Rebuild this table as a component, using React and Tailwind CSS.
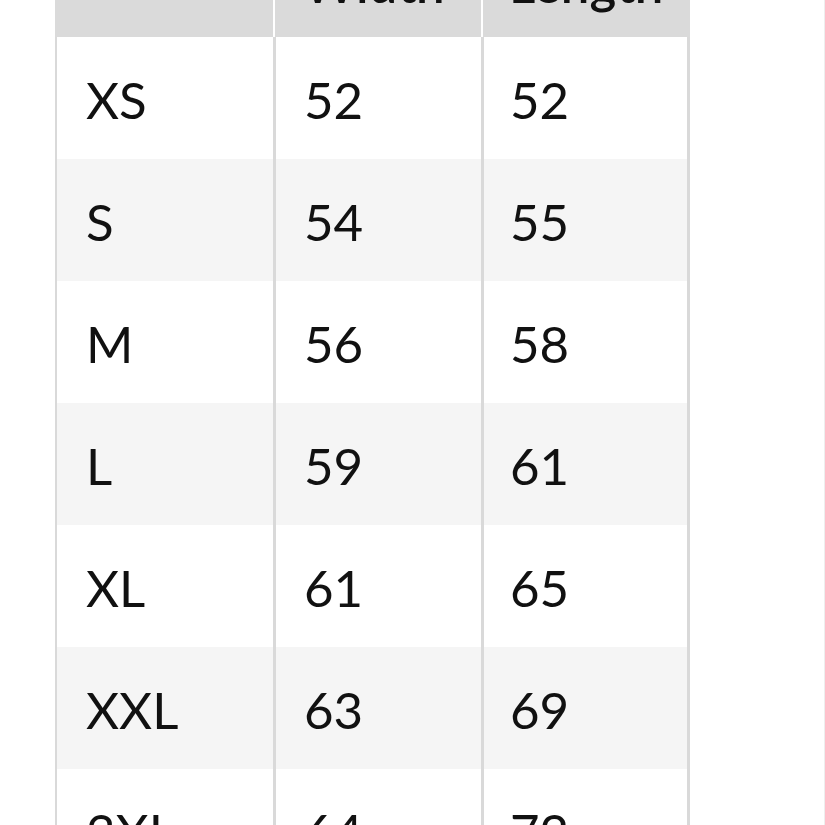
import React from "react";

const rows = [
  ["XS", "52", "52"],
  ["S", "54", "55"],
  ["M", "56", "58"],
  ["L", "59", "61"],
  ["XL", "61", "65"],
  ["XXL", "63", "69"],
  ["3XL", "64", "72"],
];

const pads = ["pl-[29px]", "pl-[28px]", "pl-[26px]"];

export default function App() {
  return (
    <div
      className="w-[825px] h-[825px] overflow-hidden bg-white border-r border-[#eeeeee]"
      style={{ fontFamily: "Lato, 'Liberation Sans', sans-serif" }}
    >
      <div className="ml-[55px] w-[635px] mt-[-60px] text-[51px] text-[#111111]">
        <div className="flex h-[97px] gap-[2px]">
          <div className="w-[218px] bg-[#dadada]"></div>
          <div className="w-[206px] bg-[#dadada] pt-[19px] pl-[28px] leading-[50px] font-semibold">
            Width
          </div>
          <div className="flex-1 bg-[#dadada] pt-[19px] pl-[26px] leading-[50px] font-semibold">
            Length
          </div>
        </div>
        <div className="flex flex-col bg-[#d9d9d9] pl-[2px] pr-[3px]">
          {rows.map((r, i) => (
            <div key={r[0]} className="grid grid-cols-[216px_205px_203px] gap-x-[3px] h-[122px]">
              {r.map((c, j) => (
                <div
                  key={j}
                  className={`flex items-center pt-[4px] ${pads[j]} ${i % 2 === 1 ? "bg-[#f5f5f5]" : "bg-white"}`}
                >
                  <span>{c}</span>
                </div>
              ))}
            </div>
          ))}
        </div>
      </div>
    </div>
  );
}
